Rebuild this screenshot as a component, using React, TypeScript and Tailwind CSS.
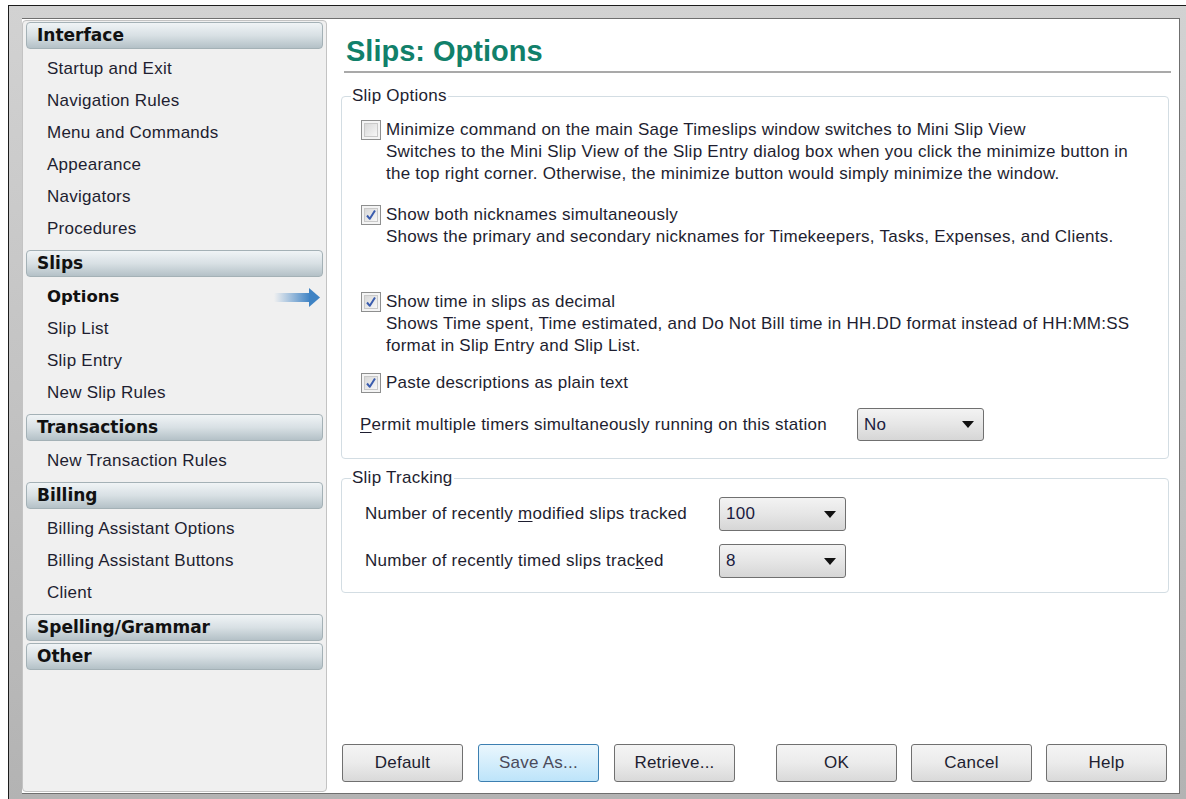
import type { ReactNode } from 'react'

type NavGroup = {
  title: string
  items: string[]
}

const NAV: NavGroup[] = [
  {
    title: 'Interface',
    items: ['Startup and Exit', 'Navigation Rules', 'Menu and Commands', 'Appearance', 'Navigators', 'Procedures'],
  },
  { title: 'Slips', items: ['Options', 'Slip List', 'Slip Entry', 'New Slip Rules'] },
  { title: 'Transactions', items: ['New Transaction Rules'] },
  { title: 'Billing', items: ['Billing Assistant Options', 'Billing Assistant Buttons', 'Client'] },
  { title: 'Spelling/Grammar', items: [] },
  { title: 'Other', items: [] },
]

const ACTIVE_ITEM = 'Options'

function SelectedArrow() {
  return (
    <svg width="46" height="19" viewBox="0 0 46 19">
      <defs>
        <linearGradient id="arrowShaft" x1="0" y1="0" x2="1" y2="0">
          <stop offset="0%" stopColor="#4a8ac9" stopOpacity="0" />
          <stop offset="100%" stopColor="#3f83c4" />
        </linearGradient>
      </defs>
      <rect x="0" y="5" width="36" height="9" fill="url(#arrowShaft)" />
      <polygon points="35,0 46,9.5 35,19" fill="#3f83c4" />
    </svg>
  )
}

function Sidebar() {
  return (
    <div className="mt-[1px] mb-[1px] w-[305px] shrink-0 rounded-[4px] border border-[#c3c3c3] bg-[#f0f0f0] px-[3px] pt-[1px]">
      {NAV.map((group) => (
        <div key={group.title} className={group.items.length === 0 ? 'mb-[2px]' : ''}>
          <div className="flex h-[27px] items-center rounded-[4px] border border-[#a4b1b6] bg-gradient-to-b from-[#f0f4f6] via-[#d8e0e4] to-[#b4c1c7] pl-[10px] font-['DejaVu_Sans',sans-serif] text-[17px] font-bold tracking-normal text-[#111]">
            {group.title}
          </div>
          {group.items.length > 0 && (
            <div className="pt-[4px] pb-[5px]">
              {group.items.map((item) => (
                <div
                  key={item}
                  className={`flex h-[32px] items-center justify-between pl-[21px] pr-[3px] ${
                    item === ACTIVE_ITEM ? "font-['DejaVu_Sans',sans-serif] text-[16.5px] font-bold tracking-normal text-[#111]" : ''
                  }`}
                >
                  <span>{item}</span>
                  {item === ACTIVE_ITEM && <SelectedArrow />}
                </div>
              ))}
            </div>
          )}
        </div>
      ))}
    </div>
  )
}

function Checkbox({ checked }: { checked: boolean }) {
  return (
    <span className="mt-[1px] block h-[20px] w-[20px] shrink-0 border border-[#8e8f8f] bg-[#f4f4f4] p-[2px]">
      <span className="flex h-full w-full items-center justify-center border border-[#c9c9c9] bg-gradient-to-br from-[#d8d8d8] to-[#f7f7f7]">
        {checked && (
          <svg width="12" height="12" viewBox="0 0 12 12">
            <path d="M2 6.5 L4.8 9.8 L10 1.5" fill="none" stroke="#3a5cae" strokeWidth="2" strokeLinejoin="round" />
          </svg>
        )}
      </span>
    </span>
  )
}

function Dropdown({ value, height }: { value: string; height: string }) {
  return (
    <div
      className={`flex w-[127px] ${height} items-center justify-between rounded-[3px] border border-[#707070] bg-gradient-to-b from-[#f3f3f3] via-[#e6e6e6] to-[#d6d6d6] pl-[6px] pr-[9px] text-[#1b1b40]`}
    >
      <span>{value}</span>
      <svg width="12" height="7" viewBox="0 0 12 7">
        <polygon points="0,0 12,0 6,7" fill="#111" />
      </svg>
    </div>
  )
}

function OptionRow({
  checked,
  label,
  lines,
  className = '',
}: {
  checked: boolean
  label: string
  lines: string[]
  className?: string
}) {
  return (
    <div className={`flex gap-[5px] ${className}`}>
      <Checkbox checked={checked} />
      <div className="leading-[22px]">
        <div>{label}</div>
        {lines.map((line) => (
          <div key={line} className="whitespace-nowrap">
            {line}
          </div>
        ))}
      </div>
    </div>
  )
}

function GroupBox({ title, className = '', children }: { title: string; className?: string; children: ReactNode }) {
  return (
    <fieldset className={`rounded-[4px] border border-[#d3dde3] ${className}`}>
      <legend className="ml-[9px] px-[1px] leading-[20px]">{title}</legend>
      {children}
    </fieldset>
  )
}

function DialogButton({ label, focused = false }: { label: string; focused?: boolean }) {
  return (
    <button
      type="button"
      className={`flex h-[38px] w-[121px] items-center justify-center rounded-[3px] border ${
        focused
          ? 'border-[#3c7fb1] bg-gradient-to-b from-[#eaf6fd] to-[#bde4fa] text-[#4a4a5a]'
          : 'border-[#707070] bg-gradient-to-b from-[#f4f4f4] via-[#ebebeb] to-[#d9d9d9] text-[#1e1e30]'
      }`}
    >
      {label}
    </button>
  )
}

export default function App() {
  return (
    <div className="h-[799px] w-[1186px] overflow-hidden bg-white pt-[5px] pl-[8px] font-['Liberation_Sans',Arial,sans-serif] text-[17px] tracking-[0.25px] text-[#1e1e30]">
      {/* window frame */}
      <div className="flex h-[794px] w-[1178px] border-t border-l border-[#1c1c1c] bg-gradient-to-b from-[#d2d2d2] to-[#b3b3b3] pt-[12px] pb-[5px] pl-[13px] pr-[6px]">
        <div className="flex flex-1 border-t border-r border-b border-[#6f6f6f] bg-white">
          <Sidebar />

          <div className="flex flex-1 flex-col pl-[14px] pr-[10px] pb-[11px]">
            <div className="mr-[-2px] ml-[3px] border-b-2 border-[#a9a9a9] pt-[14px] pb-[2px] pl-[2px]">
              <h1 className="h-[36px] text-[29px] leading-[36px] font-bold tracking-normal text-[#11806a]">Slips: Options</h1>
            </div>

            <GroupBox title="Slip Options" className="mt-[13px]">
              <div className="pt-[13px] pb-[17px] pl-[19px]">
                <OptionRow
                  checked={false}
                  label="Minimize command on the main Sage Timeslips window switches to Mini Slip View"
                  lines={[
                    'Switches to the Mini Slip View of the Slip Entry dialog box when you click the minimize button in',
                    'the top right corner. Otherwise, the minimize button would simply minimize the window.',
                  ]}
                />
                <OptionRow
                  checked
                  className="mt-[19px]"
                  label="Show both nicknames simultaneously"
                  lines={['Shows the primary and secondary nicknames for Timekeepers, Tasks, Expenses, and Clients.']}
                />
                <OptionRow
                  checked
                  className="mt-[43px]"
                  label="Show time in slips as decimal"
                  lines={[
                    'Shows Time spent, Time estimated, and Do Not Bill time in HH.DD format instead of HH:MM:SS',
                    'format in Slip Entry and Slip List.',
                  ]}
                />
                <OptionRow checked className="mt-[15px]" label="Paste descriptions as plain text" lines={[]} />
                <div className="mt-[14px] ml-[-1px] flex items-center">
                  <span className="w-[497px]">
                    <span className="underline underline-offset-2">P</span>ermit multiple timers simultaneously running on this station
                  </span>
                  <Dropdown value="No" height="h-[33px]" />
                </div>
              </div>
            </GroupBox>

            <GroupBox title="Slip Tracking" className="mt-[9px]">
              <div className="pt-[9px] pb-[14px] pl-[23px]">
                <div className="flex items-center">
                  <span className="w-[354px]">
                    Number of recently <span className="underline underline-offset-2">m</span>odified slips tracked
                  </span>
                  <Dropdown value="100" height="h-[34px]" />
                </div>
                <div className="mt-[13px] flex items-center">
                  <span className="w-[354px]">
                    Number of recently timed slips trac<span className="underline underline-offset-2">k</span>ed
                  </span>
                  <Dropdown value="8" height="h-[34px]" />
                </div>
              </div>
            </GroupBox>

            <div className="mt-auto ml-[1px] flex">
              <div className="flex gap-[15px]">
                <DialogButton label="Default" />
                <DialogButton label="Save As..." focused />
                <DialogButton label="Retrieve..." />
              </div>
              <div className="ml-[41px] flex gap-[14px]">
                <DialogButton label="OK" />
                <DialogButton label="Cancel" />
                <DialogButton label="Help" />
              </div>
            </div>
          </div>
        </div>
      </div>
    </div>
  )
}
